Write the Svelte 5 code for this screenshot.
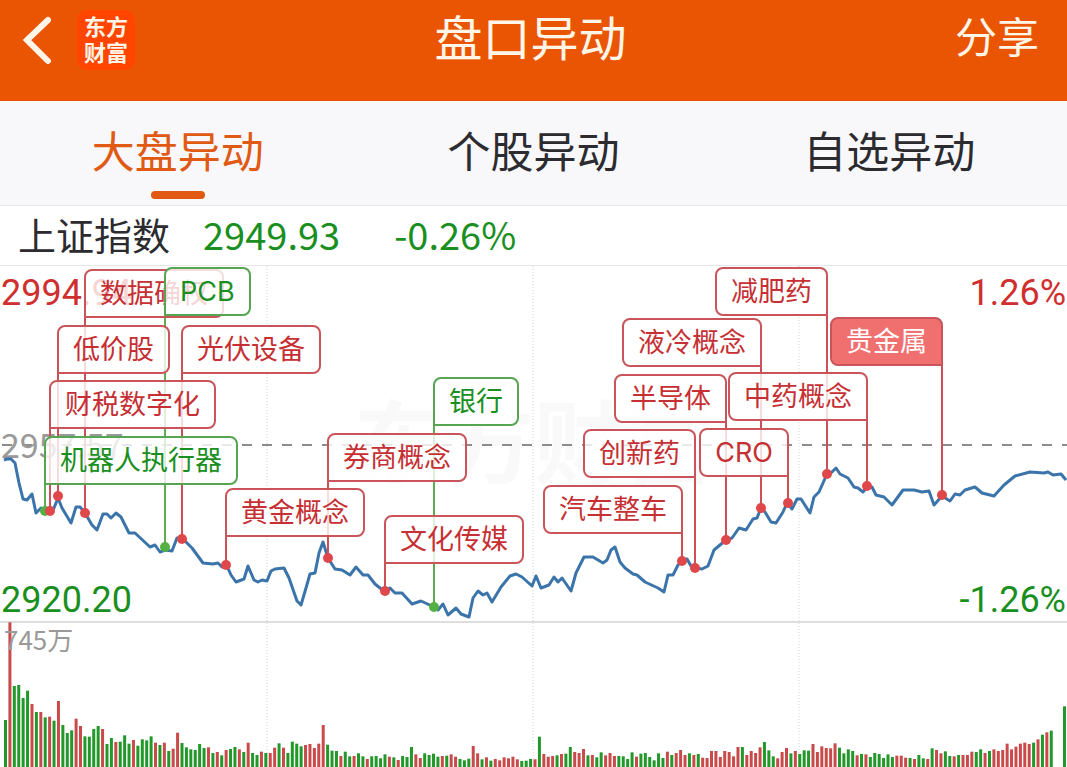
<script>
    const WIDTH = 1067;
    const HEIGHT = 501;
    const TAG_HEIGHT = 49;

    const tabs = ["大盘异动", "个股异动", "自选异动"];
    let activeTab = 0;

    // x and y are the point on the line, top is where the label starts
    const events = [
        { name: "数据确权", x: 85, y: 247, top: 3 },
        { name: "PCB", x: 165, y: 281, top: 1, down: true },
        { name: "低价股", x: 58, y: 230, top: 59 },
        { name: "光伏设备", x: 182, y: 273, top: 59 },
        { name: "财税数字化", x: 50, y: 245, top: 114 },
        { name: "机器人执行器", x: 45, y: 245, top: 170, down: true },
        { name: "券商概念", x: 328, y: 292, top: 167 },
        { name: "黄金概念", x: 226, y: 299, top: 222 },
        { name: "银行", x: 434, y: 341, top: 111, down: true },
        { name: "文化传媒", x: 385, y: 325, top: 249 },
        { name: "减肥药", x: 827, y: 208, top: 1, left: true },
        { name: "液冷概念", x: 761, y: 242, top: 52, left: true },
        { name: "半导体", x: 726, y: 274, top: 108, left: true },
        { name: "中药概念", x: 867, y: 220, top: 106, left: true },
        { name: "创新药", x: 695, y: 302, top: 163, left: true },
        { name: "CRO", x: 788, y: 237, top: 162, left: true },
        { name: "汽车整车", x: 682, y: 295, top: 219, left: true },
        { name: "贵金属", x: 942, y: 229, top: 51, left: true, active: true },
    ];

    const dots = [...events].sort((a, b) => a.x - b.x);

    const price = `
        4,194 7,193 11,193 15,197 19,217 23,233 27,234 32,228 36,247 41,242 45,245 50,245 54,242
        58,232 62,242 71,257 76,241 80,241 85,247 92,259 97,264 103,248 107,248 111,252 116,247
        121,251 129,267 135,267 150,281 155,279 160,286 165,284 172,285 177,272 182,272 192,282
        203,297 213,298 218,297 222,301 226,298 231,309 236,316 244,313 248,300 254,314 258,316
        262,314 267,315 271,305 275,303 284,302 289,312 297,335 301,339 306,322 310,308 315,307
        319,287 323,276 328,292 335,303 342,304 350,309 356,301 363,309 368,309 375,318 385,326
        390,322 395,327 402,327 412,338 421,335 434,341 438,344 443,338 448,349 456,342 461,348
        469,351 473,332 478,325 483,329 487,327 492,336 501,321 510,310 516,308 522,311 532,320
        536,310 541,322 549,319 554,311 558,316 562,312 571,325 576,307 584,291 593,291 603,297
        607,294 611,284 615,281 620,296 625,302 633,308 637,309 645,316 658,322 664,326 668,309
        673,309 678,299 682,295 687,293 691,300 695,302 702,303 708,300 714,284 726,274 732,272
        739,262 746,264 753,253 757,252 761,242 765,246 771,256 776,257 783,246 787,237 792,243
        797,233 801,233 810,247 814,231 819,226 827,208 832,206 836,202 840,208 848,212 854,221
        858,222 863,226 867,221 872,221 876,229 884,231 892,239 903,224 914,224 922,226 929,225
        934,239 942,230 950,235 955,228 960,229 965,224 975,221 982,227 994,230 1004,219
        1015,210 1030,206 1044,207 1048,206 1053,209 1061,208 1066,214`;

    // one value per minute, negative when the minute closed lower
    const volumes = [
        -141, 434, -243, -246, -207, -229, 189, -165, 165, -149, 151, -139, 198, -126, -102,
        -110, 145, 123, -92, -91, -114, -123, 114, -69, -87, 75, -76, -95, -70, 81,
        -64, -83, -80, -92, 73, -66, 73, -48, 55, 103, -72, -59, -53, -51, -69,
        -57, 59, -42, 45, -35, 51, -54, -60, 53, -45, 73, -42, -36, 46, -42,
        42, 58, -71, 58, -42, -76, -70, -62, 66, 69, 57, 70, 126, -67, -49,
        -48, 33, -46, -32, 33, -41, -32, 24, -32, -33, -26, -38, 31, -29, 21,
        -33, -30, -60, 38, 27, -41, -36, -40, -31, 33, -34, 38, 31, -24, -20,
        -25, 63, 41, -23, 29, -19, 24, 20, 29, 26, 31, 23, -18, -19, -24,
        23, -91, 39, 31, 33, -35, 39, -40, -60, 45, 42, 54, -35, 36, -29,
        -44, 35, 42, 33, -33, -32, -24, -44, 31, -40, -42, -30, -20, -41, -27,
        46, -36, 42, 51, 36, -41, 36, -39, 28, 27, 48, 48, 30, 48, 45,
        32, 60, -60, 36, 48, 42, 59, -75, -50, -32, 26, 45, 57, -41, 48,
        -39, -50, -49, 69, 45, 62, 57, 56, 71, -58, -41, -53, -48, 35, -39,
        38, -30, -42, -39, -27, -38, -30, 34, 34, 28, -27, 24, -36, -26, 24,
        -56, 51, 41, -47, -33, 32, -36, 36, 36, 46, -45, -53, 42, -48, 53,
        48, 51, 70, 53, 61, 70, 73, 69, -73, 83, -97, 104, -109, 0, 0, -182,
    ];

    const step = (WIDTH - 8) / (volumes.length - 1);

    function tagStyle(event) {
        const top = `top: ${(event.top / HEIGHT) * 100}%`;
        return event.left
            ? `${top}; right: ${((WIDTH - event.x - 1) / WIDTH) * 100}%`
            : `${top}; left: ${((event.x - 1) / WIDTH) * 100}%`;
    }
</script>

<main>
    <header>
        <div class="brand">
            <button class="back" aria-label="返回">
                <svg viewBox="0 0 30 50" width="30" height="50" aria-hidden="true">
                    <path d="M26 5 5 25 26 46" />
                </svg>
            </button>
            <span class="logo">东方<br />财富</span>
        </div>
        <h1>盘口异动</h1>
        <button class="share">分享</button>
    </header>

    <nav>
        {#each tabs as tab, index}
            <button
                class:active={activeTab === index}
                aria-pressed={activeTab === index}
                on:click={() => (activeTab = index)}
            >
                {tab}
            </button>
        {/each}
    </nav>

    <section class="quote">
        <h2>上证指数</h2>
        <span class="last">2949.93</span>
        <span>-0.26%</span>
    </section>

    <section class="chart">
        <svg viewBox="0 0 {WIDTH} {HEIGHT}" role="img" aria-label="上证指数分时走势">
            <text class="watermark" x="534" y="210" text-anchor="middle">东方财富</text>

            {#each [267, 533, 799] as x}
                <line class="grid" x1={x} x2={x} y1="0" y2={HEIGHT} />
            {/each}
            <line class="rule" x1="0" x2={WIDTH} y1="356" y2="356" />
            <line class="base" x1="2" x2={WIDTH} y1="179" y2="179" />

            <!-- volume -->
            {#each volumes as volume, index}
                <rect
                    class={volume > 0 ? "up" : "down"}
                    x={4 + index * step}
                    y={HEIGHT - Math.abs(volume) / 3}
                    width="3"
                    height={Math.abs(volume) / 3}
                />
            {/each}

            <text class="axis up" x="1" y="39">2994.94</text>
            <text class="axis up" x="1066" y="39" text-anchor="end">1.26%</text>
            <text class="axis down" x="1" y="346">2920.20</text>
            <text class="axis down" x="1066" y="346" text-anchor="end">-1.26%</text>
            <text class="middle" x="1" y="192">2957.57</text>
            <text class="volume" x="4" y="384">745万</text>

            <polyline class="price" points={price} />

            {#each dots as event}
                <line
                    class="stem"
                    class:down={event.down}
                    x1={event.x}
                    x2={event.x}
                    y1={event.top + TAG_HEIGHT}
                    y2={event.y}
                />
                <circle class={event.down ? "dot down" : "dot"} cx={event.x} cy={event.y} r="5" />
            {/each}
        </svg>

        {#each events as event}
            <button
                class="tag"
                class:left={event.left}
                class:down={event.down}
                class:active={event.active}
                style={tagStyle(event)}
            >
                {event.name}
            </button>
        {/each}
    </section>
</main>

<style>
    :global(body) {
        margin: 0;
        background: #fff;
    }

    main {
        font-family: "Noto Sans CJK SC", sans-serif;
        color: #2b2b30;
        overflow: hidden;
    }

    button {
        font: inherit;
        color: inherit;
        background: none;
        border: 0;
        padding: 0;
        cursor: pointer;
    }

    h1,
    h2 {
        margin: 0;
        font-weight: 400;
    }

    /* HEADER */

    header {
        display: grid;
        grid-template-columns: 1fr auto 1fr;
        align-items: center;
        box-sizing: border-box;
        height: 101px;
        padding: 0 28px 22px 22px;
        background: #ea5504;
        color: #fff6e8;

        h1 {
            padding-bottom: 10px;
            font-size: 48px;
            line-height: 60px;
        }
    }

    .brand {
        display: flex;
        align-items: center;
        gap: 25px;
    }

    .back {
        display: flex;

        path {
            fill: none;
            stroke: #fff6e8;
            stroke-width: 6;
            stroke-linecap: round;
        }
    }

    .logo {
        width: 58px;
        padding: 2px 0 6px;
        border-radius: 10px;
        background: #ff4500;
        font-size: 22px;
        font-weight: 700;
        line-height: 26px;
        text-align: center;
    }

    .share {
        justify-self: end;
        padding-bottom: 10px;
        font-size: 42px;
        line-height: 60px;
    }

    /* TABS */

    nav {
        display: grid;
        grid-template-columns: repeat(3, 1fr);
        background: #f8f8fb;
        border-bottom: 1px solid #e6e6e8;

        button {
            display: flex;
            flex-direction: column;
            align-items: center;
            padding: 16px 0 6px;
            font-size: 43px;
            line-height: 64px;
        }

        button::after {
            content: "";
            width: 54px;
            height: 8px;
            margin-top: 10px;
            border-radius: 4px;
        }

        .active {
            color: #e05a14;
        }

        .active::after {
            background: #e05a14;
        }
    }

    /* QUOTE */

    .quote {
        display: flex;
        align-items: center;
        padding-left: 18px;
        padding-bottom: 3px;
        border-bottom: 1px solid #e6e6e6;
        font-size: 38px;
        line-height: 56px;
        color: #1a8f1f;

        h2 {
            font-size: 38px;
            color: #2b2b30;
        }

        .last {
            margin: 0 54px 0 33px;
        }
    }

    /* CHART */

    .chart {
        position: relative;

        svg {
            display: block;
            width: 100%;
            height: auto;
        }
    }

    .watermark {
        font-size: 90px;
        font-weight: 700;
        fill: #f9f9f9;
    }

    .grid {
        stroke: #d4d4d4;
        stroke-dasharray: 1 2;
    }

    .rule {
        stroke: #dedede;
        stroke-width: 2;
    }

    .base {
        stroke: #8c8c8c;
        stroke-width: 2;
        stroke-dasharray: 10 10;
    }

    rect.up {
        fill: #c94a4a;
    }

    rect.down {
        fill: #23982a;
    }

    .axis {
        font-family: Roboto, sans-serif;
        font-size: 36px;
    }

    .axis.up {
        fill: #cf2f2f;
    }

    .axis.down {
        fill: #1a8f1f;
    }

    .middle {
        font-size: 34px;
        fill: #999;
    }

    .volume {
        font-size: 26px;
        fill: #999;
    }

    .price {
        fill: none;
        stroke: #3b74aa;
        stroke-width: 3;
        stroke-linejoin: round;
    }

    .stem {
        stroke: #cc5056;
        stroke-width: 2;
    }

    .stem.down {
        stroke: #5cad50;
    }

    .dot {
        fill: #df474b;
    }

    .dot.down {
        fill: #55b043;
    }

    .tag {
        position: absolute;
        box-sizing: border-box;
        height: 49px;
        padding: 0 14px;
        border: 2px solid #c9555b;
        border-radius: 8px 8px 8px 0;
        background: rgba(255, 255, 255, 0.8);
        color: #c62f33;
        font-family: Inter, "Noto Sans CJK SC", sans-serif;
        font-size: 27px;
        line-height: 45px;
        white-space: nowrap;
    }

    .tag.left {
        border-radius: 8px 8px 0 8px;
    }

    .tag.down {
        border-color: #55a552;
        color: #1a8f1f;
    }

    .tag.active {
        background: #f07070;
        color: #fff;
    }
</style>
